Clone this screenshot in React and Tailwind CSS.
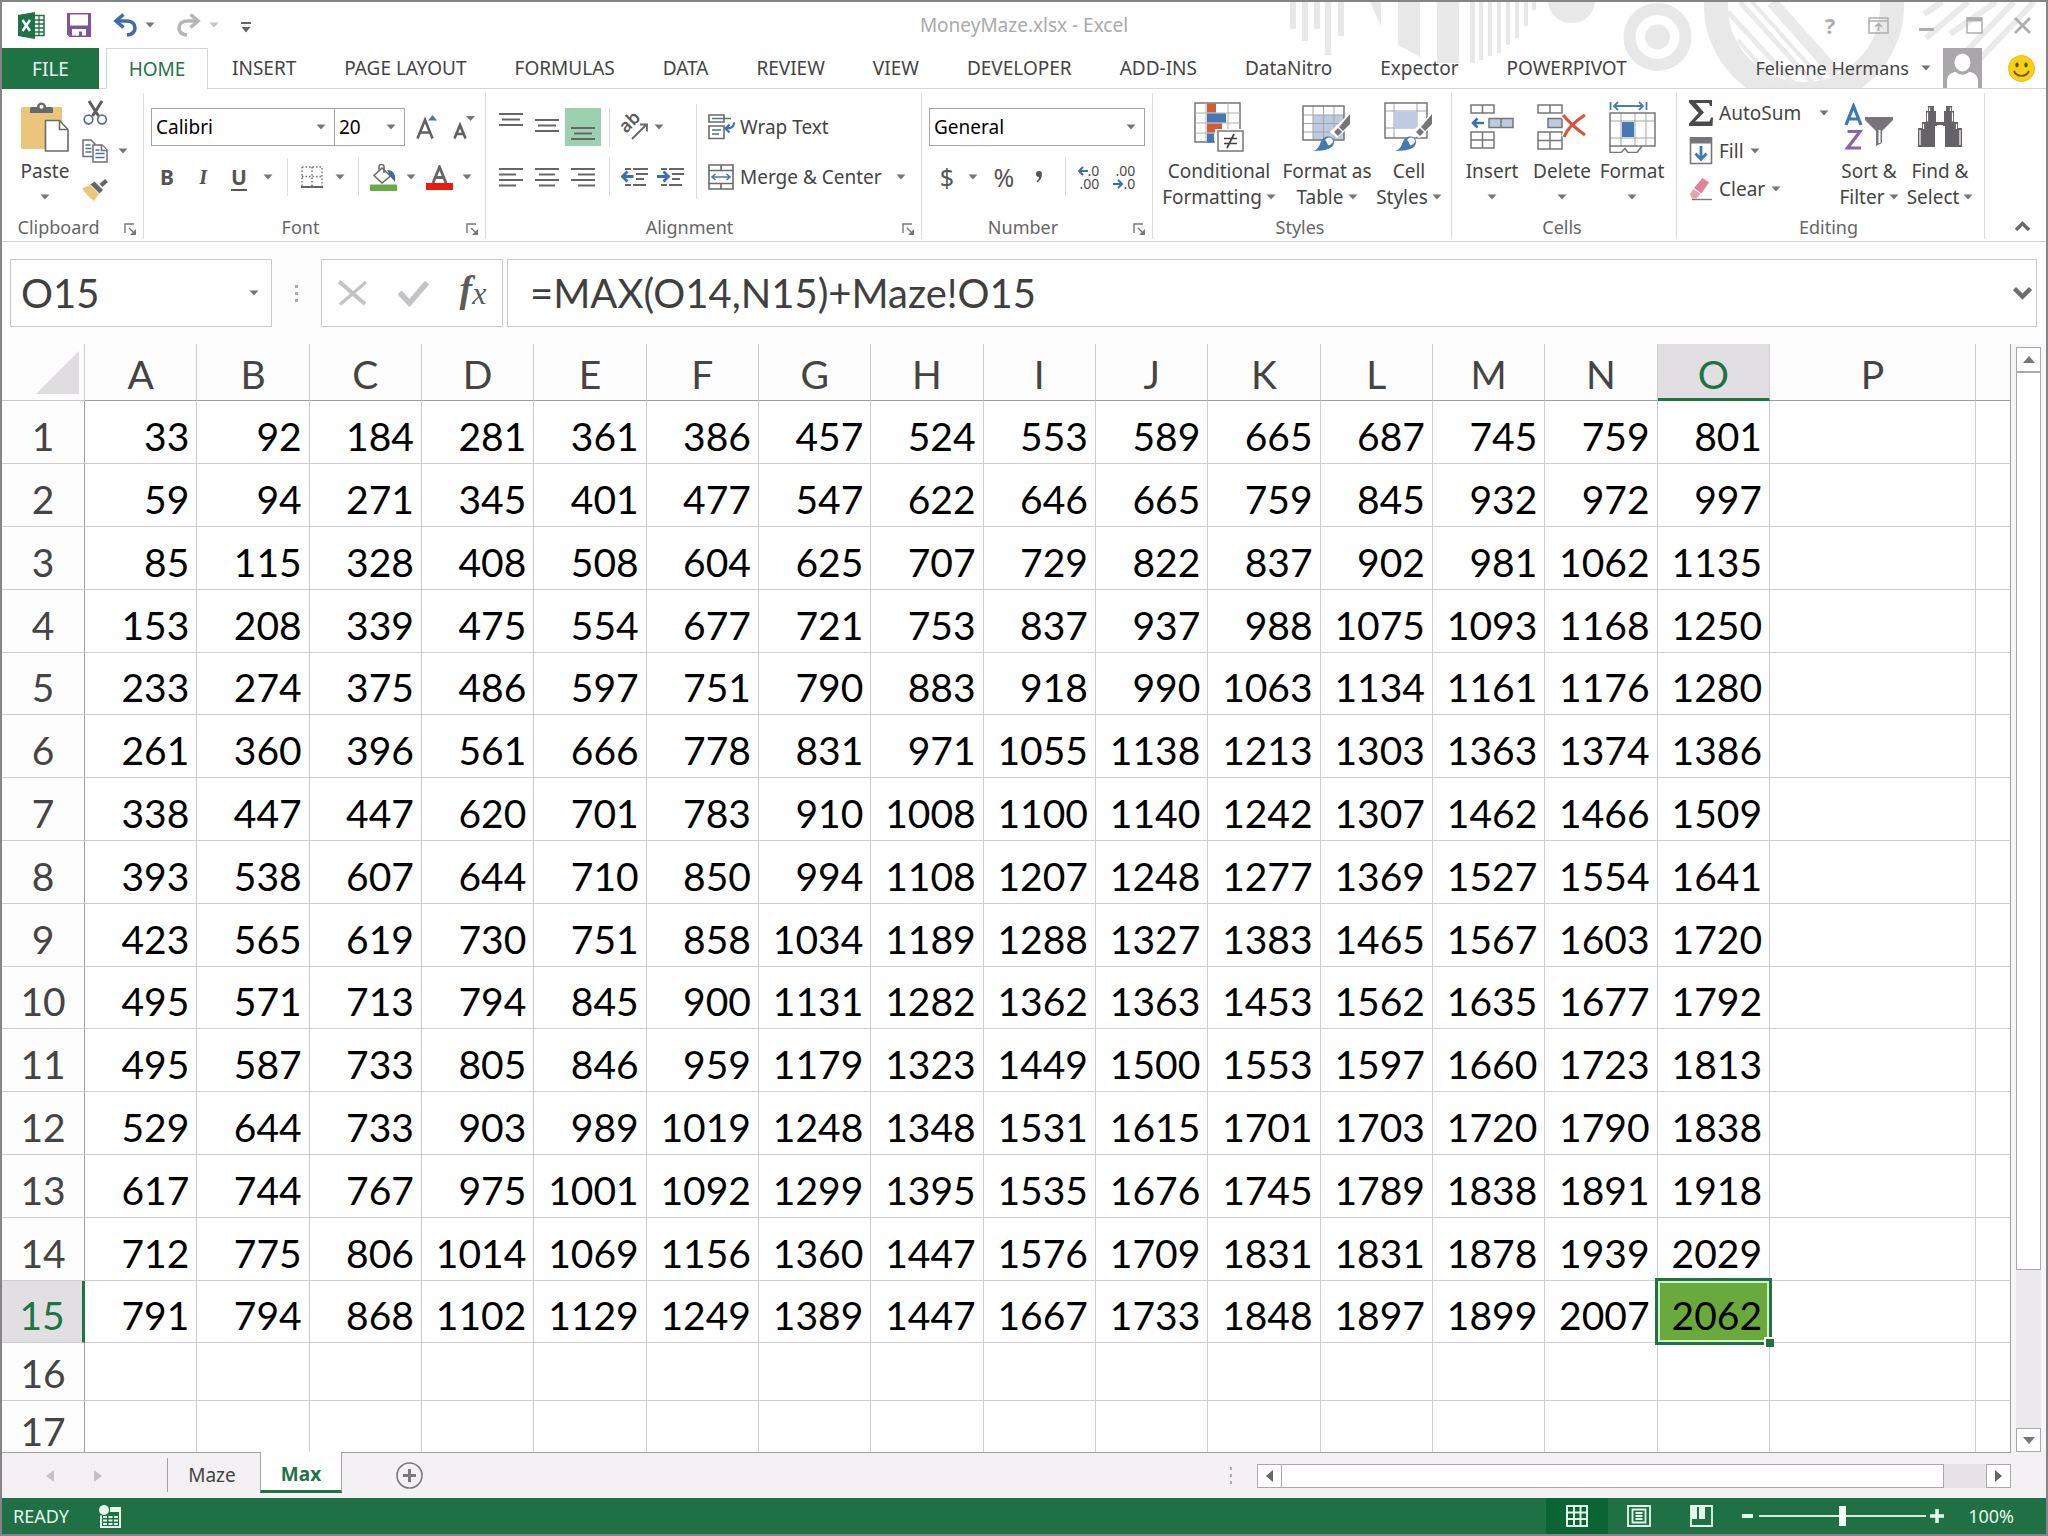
import React from "react";

const COLUMNS = ["A", "B", "C", "D", "E", "F", "G", "H", "I", "J", "K", "L", "M", "N", "O", "P", ""];

const ROWS = [
  [33, 92, 184, 281, 361, 386, 457, 524, 553, 589, 665, 687, 745, 759, 801],
  [59, 94, 271, 345, 401, 477, 547, 622, 646, 665, 759, 845, 932, 972, 997],
  [85, 115, 328, 408, 508, 604, 625, 707, 729, 822, 837, 902, 981, 1062, 1135],
  [153, 208, 339, 475, 554, 677, 721, 753, 837, 937, 988, 1075, 1093, 1168, 1250],
  [233, 274, 375, 486, 597, 751, 790, 883, 918, 990, 1063, 1134, 1161, 1176, 1280],
  [261, 360, 396, 561, 666, 778, 831, 971, 1055, 1138, 1213, 1303, 1363, 1374, 1386],
  [338, 447, 447, 620, 701, 783, 910, 1008, 1100, 1140, 1242, 1307, 1462, 1466, 1509],
  [393, 538, 607, 644, 710, 850, 994, 1108, 1207, 1248, 1277, 1369, 1527, 1554, 1641],
  [423, 565, 619, 730, 751, 858, 1034, 1189, 1288, 1327, 1383, 1465, 1567, 1603, 1720],
  [495, 571, 713, 794, 845, 900, 1131, 1282, 1362, 1363, 1453, 1562, 1635, 1677, 1792],
  [495, 587, 733, 805, 846, 959, 1179, 1323, 1449, 1500, 1553, 1597, 1660, 1723, 1813],
  [529, 644, 733, 903, 989, 1019, 1248, 1348, 1531, 1615, 1701, 1703, 1720, 1790, 1838],
  [617, 744, 767, 975, 1001, 1092, 1299, 1395, 1535, 1676, 1745, 1789, 1838, 1891, 1918],
  [712, 775, 806, 1014, 1069, 1156, 1360, 1447, 1576, 1709, 1831, 1831, 1878, 1939, 2029],
  [791, 794, 868, 1102, 1129, 1249, 1389, 1447, 1667, 1733, 1848, 1897, 1899, 2007, 2062],
  [],
  [],
];

const TABS = ["INSERT", "PAGE LAYOUT", "FORMULAS", "DATA", "REVIEW", "VIEW", "DEVELOPER", "ADD-INS", "DataNitro", "Expector", "POWERPIVOT"];

/* ---------- small shared pieces ---------- */

function Arrow({ className = "text-[#767676]" }) {
  return (
    <svg width="10" height="6" viewBox="0 0 10 6" className={`shrink-0 ${className}`} aria-hidden="true">
      <path d="M0.5 0.5h9L5 5.5z" fill="currentColor" />
    </svg>
  );
}

function IconButton({ label, className = "", children }) {
  return (
    <button type="button" aria-label={label} className={`flex shrink-0 items-center justify-center ${className}`}>
      {children}
    </button>
  );
}

function Group({ title, launcher, className = "", children }) {
  return (
    <section className={`flex shrink-0 flex-col ${className}`} aria-label={title}>
      <div className="flex min-h-0 flex-1">
        <div className="flex flex-1">{children}</div>
        <div className="mt-1 w-px bg-[#dcdbdd]" />
      </div>
      <div className="relative mb-0.5 flex h-6 items-center justify-center border-r border-[#dcdbdd] text-[18px] leading-6 text-[#666]">
        <span className={launcher ? "pr-7" : "pr-1"}>{title}</span>
        {launcher && (
          <button type="button" aria-label={`${title} settings`} className="absolute right-1.5 top-2">
            <svg width="13" height="13" viewBox="0 0 13 13" fill="none" stroke="#777" strokeWidth="1.4">
              <path d="M1 10V1h9M5 5l5.500 5.500" />
              <path d="M12 6v6H6z" fill="#777" stroke="none" />
            </svg>
          </button>
        )}
      </div>
    </section>
  );
}

function BigButton({ icon, lines, className = "" }) {
  return (
    <button type="button" className={`flex shrink-0 flex-col items-center pt-[13px] text-[19px] leading-[26px] text-[#444] ${className}`}>
      <span className="flex h-[50px] items-center justify-center">{icon}</span>
      <span className="mt-1.5 whitespace-nowrap">{lines[0]}</span>
      <span className="flex h-[26px] items-center gap-1 whitespace-nowrap">
        {lines[1]}
        <Arrow />
      </span>
    </button>
  );
}

function Lines({ rows, y = 0 }) {
  return (
    <svg width="24" height="38" viewBox="0 0 24 38" stroke="#666" strokeWidth="2" aria-hidden="true">
      {rows.map(([a, b], i) => (
        <path key={i} d={`M${a} ${y + i * 5.5}H${b}`} />
      ))}
    </svg>
  );
}

/* ---------- icons ---------- */

const ExcelIcon = () => (
  <svg width="27" height="27" viewBox="0 0 27 27" aria-hidden="true">
    <rect x="14" y="3.500" width="12" height="20" fill="#fff" stroke="#1f7246" strokeWidth="1.500" />
    <path d="M15 8h11M15 12h11M15 16h11M15 20h11M21 4v19" stroke="#1f7246" strokeWidth="1.300" />
    <path d="M0 3 17 0v27L0 24z" fill="#1f7246" />
    <path d="M4.500 8l7.500 11M12 8 4.500 19" stroke="#fff" strokeWidth="2.500" />
  </svg>
);

const SaveIcon = () => (
  <svg width="24" height="24" viewBox="0 0 24 24" aria-hidden="true">
    <path d="M0 0h24v24H2.500L0 21.500z" fill="#80549c" />
    <path d="M3 1.500h18v11H3zM5 16h14v6.500h-4v-4h-4v4H5z" fill="#fff" />
    <path d="M9 18h3v4.500H9z" fill="#fff" />
  </svg>
);

const UndoIcon = ({ flip, color }) => (
  <svg width="24" height="24" viewBox="0 0 24 24" fill="none" stroke={color} strokeWidth="3.600" className={flip ? "-scale-x-100" : ""} aria-hidden="true">
    <path d="M4 8h9c6 0 9 3 9 7s-3 6.500-8 7" />
    <path d="M10.500 1.500 3 8l7.500 6.500" />
  </svg>
);

const PasteIcon = () => (
  <svg width="48" height="50" viewBox="0 0 48 50" aria-hidden="true">
    <rect x="0" y="5" width="41" height="42" rx="1.500" fill="#ebc57c" />
    <path d="M9 11V7q0-2 2-2h5c0-6 9-6 9 0h5q2 0 2 2v4z" fill="#69666c" />
    <circle cx="20.500" cy="4.800" r="2" fill="#fff" />
    <path d="M24.500 18.500h14l8.500 9v21.500H24.500z" fill="#fff" stroke="#6c6a6e" strokeWidth="1.600" />
    <path d="M38.500 18.500v9H47" fill="none" stroke="#6c6a6e" strokeWidth="1.600" />
  </svg>
);

const CutIcon = () => (
  <svg width="25" height="26" viewBox="0 0 25 26" fill="none" aria-hidden="true">
    <path d="M6 1l9.500 15M19 1 9.500 16" stroke="#5f5d62" strokeWidth="3" />
    <circle cx="5.500" cy="19.500" r="4.300" stroke="#57708c" strokeWidth="1.700" />
    <circle cx="19" cy="19.500" r="4.300" stroke="#57708c" strokeWidth="1.700" />
  </svg>
);

const CopyIcon = () => (
  <svg width="26" height="24" viewBox="0 0 26 24" fill="#fff" stroke="#6b7178" strokeWidth="1.500" aria-hidden="true">
    <path d="M1 1h8l4 4v12.500H1z" />
    <path d="M3.500 6h5M3.500 9.500h6M3.500 13h6" stroke="#4d6c96" />
    <path d="M11 6h9l5 5v12H11z" />
    <path d="M19.500 6v5.500H25" />
    <path d="M13.500 11h4M13.500 14.500h9M13.500 18.500h9" stroke="#4d6c96" />
  </svg>
);

const BrushIcon = () => (
  <svg width="26" height="23" viewBox="0 0 26 23" aria-hidden="true">
    <path d="M0 10.500 8 7l9 9-5 7C8 20 4 16 0 10.500z" fill="#ebc57c" />
    <path d="M8.500 6.500l4-3 8.500 8.500-3.500 3.500z" fill="#67646a" />
    <path d="M17.500 6 23 1l3 3-5.500 5z" fill="#67646a" />
  </svg>
);

const FontSizeIcon = ({ grow }) => (
  <span className="flex items-end text-[#606060]">
    <svg width={grow ? 18 : 14} height="22" viewBox={grow ? "0 0 18 22" : "0 0 14 22"} fill="none" stroke="currentColor" strokeWidth="2.600" aria-hidden="true">
      {grow ? <path d="M1.500 21.500 9 3l7.500 18.500M4 15.500h10" /> : <path d="M1.500 21.500 7 8l5.500 13.500M3.500 17h7" />}
    </svg>
    <svg width="9" height="24" viewBox="0 0 9 24" aria-hidden="true" className={grow ? "-ml-1.5" : "-ml-px"}>
      <path d={grow ? "M0 5.500h9L4.500 0z" : "M0 1h9L4.500 6z"} fill={grow ? "#53719c" : "#777"} />
    </svg>
  </span>
);

const BorderIcon = () => (
  <svg width="22" height="22" viewBox="0 0 22 22" fill="none" stroke="#777" strokeWidth="1.500" aria-hidden="true">
    <path d="M1 1h20v19M1 1v19M11 1v19M1 10.500h20" strokeDasharray="1.600 1.900" />
    <path d="M0 21h22" strokeWidth="2" stroke="#666" />
  </svg>
);

const FillColorIcon = () => (
  <svg width="27" height="27" viewBox="0 0 27 27" fill="none" aria-hidden="true">
    <path d="M12 4 20.500 12 12 19 4 11.500z" fill="#fff" stroke="#666" strokeWidth="1.500" />
    <path d="M9 7V2.500q0-2 2.500-2t2.500 2V9" stroke="#666" strokeWidth="1.500" />
    <path d="M17 6c6 0 9 4 8 12l-3.500-4z" fill="#3f66a5" />
    <path d="M0 20.500h27v6.500H0z" fill="#6aaa45" />
  </svg>
);

const FontColorIcon = () => (
  <svg width="27" height="25" viewBox="0 0 27 25" fill="none" aria-hidden="true">
    <path d="M7 18 13.500 2 20 18M9.500 12.500h8" stroke="#666" strokeWidth="2.800" />
    <path d="M0 18h27v7H0z" fill="#ea1c12" />
  </svg>
);

const OrientationIcon = () => (
  <svg width="28" height="28" viewBox="0 0 28 28" aria-hidden="true">
    <text x="0" y="0" transform="translate(6 21) rotate(-45)" fontSize="18" fontFamily="Noto Sans, sans-serif" fontWeight="600" fill="#5c5c5c">ab</text>
    <path d="M12 26 26 12M20 11.500h7v7" fill="none" stroke="#666" strokeWidth="1.800" />
  </svg>
);

const IndentIcon = ({ inward }) => (
  <svg width="27" height="20" viewBox="0 0 27 20" fill="none" stroke="#666" strokeWidth="1.800" aria-hidden="true">
    <path d="M4 2h6M12 2h15M15 7h12M15 12h8M4 18h6M12 18h13" />
    {inward ? <path d="M0 9.500h11M6.500 4.500l5 5-5 5" stroke="#3c6fb0" strokeWidth="2.800" /> : <path d="M1.500 9.500h11M6.500 4.500l-5 5 5 5" stroke="#3c6fb0" strokeWidth="2.800" />}
  </svg>
);

const WrapIcon = () => (
  <svg width="27" height="26" viewBox="0 0 27 26" fill="none" stroke="#6a6a6a" strokeWidth="1.600" aria-hidden="true">
    <path d="M1 1h15v7H1zM1 12h15v12.500H1z" />
    <path d="M4 4.500h19M4 16h9M4 20h7" stroke="#5a6f8c" />
    <path d="M26 8.500c0 4-3 6-7.500 6M21.500 10.500l-4 4 4 4" stroke="#3c6fb0" strokeWidth="2.200" />
  </svg>
);

const MergeIcon = () => (
  <svg width="26" height="26" viewBox="0 0 26 26" fill="none" stroke="#6a6a6a" strokeWidth="1.600" aria-hidden="true">
    <path d="M1 1h24v24H1zM1 6.500h24M1 19.500h24M13 1v5.500M13 19.500V25" />
    <path d="M4 13h18M7.500 10 4 13l3.500 3M18.500 10l3.500 3-3.500 3" stroke="#4a7bab" />
  </svg>
);

const DecimalIcon = ({ more }) => (
  <span className="flex flex-col text-[14px] leading-[13px] text-[#4a4a4a]">
    <span className="flex items-center justify-end">
      {more && (
        <svg width="11" height="10" viewBox="0 0 11 10" fill="none" stroke="#3c6fb0" strokeWidth="2" aria-hidden="true">
          <path d="M11 5H2M6 1 2 5l4 4" />
        </svg>
      )}
      <span>{more ? ".0" : ".00"}</span>
    </span>
    <span className="flex items-center justify-end">
      {!more && (
        <svg width="11" height="10" viewBox="0 0 11 10" fill="none" stroke="#3c6fb0" strokeWidth="2" aria-hidden="true">
          <path d="M0 5h9M5 1l4 4-4 4" />
        </svg>
      )}
      <span>{more ? ".00" : ".0"}</span>
    </span>
  </span>
);

const Brush = () => (
  <>
    <path d="M48 13v9L35 34l-5-4z" fill="#fff" stroke="#fff" strokeWidth="3" />
    <path d="M48 12v10l-7 7-4-4zM36 26l4 4-4 4-4-4z" fill="#77757a" />
    <path d="M11 49c8-2 6-10 11-13 4-3 10-1 10 4 0 6-7 9-21 9z" fill="#4479b4" />
    <path d="M23 38c3-4 8-3 8 2-2 2-3 4-5 3-1-2-1-3-3-5z" fill="#fff" />
  </>
);

const ConditionalIcon = () => (
  <svg width="50" height="50" viewBox="0 0 50 50" aria-hidden="true">
    <path d="M1 1h45v39H1z" fill="#fff" stroke="#777" strokeWidth="1.500" />
    <path d="M1 11h45M1 21h45M1 31h30M34 1v30M12 1v39" stroke="#b0aeb2" strokeWidth="1" />
    <path d="M13 1.500h9v9h-9zM13 21.500h15v9H13z" fill="#d05d3a" />
    <path d="M13 11.500h19v9H13zM13 31.500h7v9h-7z" fill="#4479b4" />
    <path d="M21 27h30v23H21z" fill="#fff" />
    <path d="M24 29h25v20H24z" fill="#fff" stroke="#777" strokeWidth="1.500" />
    <path d="M30 36.500h13M30 41.500h13M40 32l-7 14" stroke="#444" strokeWidth="1.700" />
  </svg>
);

const FormatTableIcon = () => (
  <svg width="50" height="50" viewBox="0 0 50 50" aria-hidden="true">
    <path d="M1 4h41v34H1z" fill="#fff" />
    <path d="M11 13h31v25H11z" fill="#bccbdf" />
    <path d="M1 13h41M1 21.500h41M1 30h41M11 4v34M21.500 4v34M32 4v34" stroke="#a5a4a8" />
    <path d="M1 4h41v34H1z" fill="none" stroke="#777" strokeWidth="1.500" />
    <Brush />
  </svg>
);

const CellStylesIcon = () => (
  <svg width="50" height="50" viewBox="0 0 50 50" aria-hidden="true">
    <path d="M1 1h42v35H1z" fill="#fff" />
    <path d="M1 9h42M1 26h42M10 1v35M33 1v35" stroke="#a5a4a8" />
    <path d="M10 9.500h23v16.500H10z" fill="#bfcbe4" />
    <path d="M1 1h42v35H1z" fill="none" stroke="#777" strokeWidth="1.500" />
    <Brush />
  </svg>
);

const InsertIcon = () => (
  <svg width="44" height="48" viewBox="0 0 44 48" fill="#fff" stroke="#77757a" strokeWidth="1.500" aria-hidden="true">
    <path d="M1 2h23v8H1zM12.500 2v8M1 29h23v16H1zM12.500 29v16M1 37h23" />
    <path d="M19 15.500h24v9H19z" fill="#c0cade" />
    <path d="M31 15.500v9" />
    <path d="M14 20H3M7.500 15.500 3 20l4.500 4.500" fill="none" stroke="#3c6fb0" strokeWidth="2.500" />
  </svg>
);

const DeleteIcon = () => (
  <svg width="50" height="48" viewBox="0 0 50 48" fill="#fff" stroke="#77757a" strokeWidth="1.500" aria-hidden="true">
    <path d="M1 2h24v8H1zM13 2v8M1 29h24v17H1zM13 29v17M1 37.500h24" />
    <path d="M11 15.500h14v9H11z" fill="#c0cade" />
    <path d="M26 12c5 6 12 13 22 20M48 12c-8 5-17 12-21 22" fill="none" stroke="#fff" strokeWidth="6" />
    <path d="M26 12c5 6 12 13 22 20M48 12c-8 5-17 12-21 22" fill="none" stroke="#d8553a" strokeWidth="3.200" />
  </svg>
);

const FormatIcon = () => (
  <svg width="47" height="52" viewBox="0 0 47 52" fill="none" stroke="#77757a" strokeWidth="1.500" aria-hidden="true">
    <path d="M1.500 1v8M37.500 1v8M5 5h29M9 1 5 5l4 4M30 1l4 4-4 4" stroke="#4a7bb0" strokeWidth="1.800" />
    <path d="M1 20h45M1 37h45M12 12v33M26 12v33M37 12v33" stroke="#a5a4a8" strokeWidth="1" />
    <path d="M1 12h45v33H1z" />
    <path d="M13 21h12v15H13z" fill="#4479b4" stroke="none" />
    <path d="M1 45v6.500h11l4-4 3 4h9l5-6.500" />
  </svg>
);

const SigmaIcon = () => (
  <svg width="24" height="26" viewBox="0 0 24 26" aria-hidden="true">
    <path d="M0 0h23v6h-2l-1-3H7l8 9.500L6 21.500h14.500l1.500-4h2L23.500 26H0v-2.500l9.500-10.500L0 2.500z" fill="#4a4a4a" />
  </svg>
);

const FillDownIcon = () => (
  <svg width="24" height="28" viewBox="0 0 24 28" aria-hidden="true">
    <path d="M1.500 1h21v25.500h-21z" fill="#fff" stroke="#77757a" strokeWidth="1.600" />
    <path d="M1 0h22v6.500H1z" fill="#77757a" />
    <path d="M12 9v13M6.500 16.500l5.500 6 5.500-6" fill="none" stroke="#3c78b4" strokeWidth="2.800" />
  </svg>
);

const EraserIcon = () => (
  <svg width="24" height="24" viewBox="0 0 24 24" aria-hidden="true">
    <path d="M13.500 1 20 5.500l-7.500 11L5 11z" fill="#e3809a" />
    <path d="M4.500 12 11.500 17l-4 4.500H3L1 17z" fill="#eb9fb1" />
    <path d="M3 22.500h20" stroke="#777" strokeWidth="1.400" />
  </svg>
);

const SortIcon = () => (
  <svg width="50" height="48" viewBox="0 0 50 48" fill="none" aria-hidden="true">
    <path d="M2 22 9.500 3 17 22M4.500 16h10" stroke="#3c78b4" strokeWidth="3.200" />
    <path d="M3.500 28.500h12.500L3.500 45H17" stroke="#8b62ab" strokeWidth="3.200" />
    <path d="M21 14h28v3L38 28v12l-6 3V28L21 17z" fill="#77757a" />
    <path d="M35.500 27v13" stroke="#fff" strokeWidth="2" />
  </svg>
);

const FindIcon = () => (
  <svg width="46" height="42" viewBox="0 0 46 42" aria-hidden="true">
    <path d="M11 0h6v5h2v11h8V5h2V0h6v5h2v11h4v6h4v19H28V20H18v21H1V22h4v-6h4V5h2z" fill="#656367" />
    <path d="M12.500 1.500V5M10.500 6.500v9M33.500 1.500V5M35.500 6.500v9M3 24v15M6.500 18v5M43 24v15M39.500 18v5" stroke="#fff" strokeWidth="1.200" />
    <path d="M19 5.500h8V15h-8zM20 19h6v22h-6z" fill="#fff" />
  </svg>
);

const Smiley = () => (
  <svg width="27" height="27" viewBox="0 0 27 27" aria-hidden="true">
    <circle cx="13.500" cy="13.500" r="13" fill="#fad016" stroke="#e9b90c" />
    <ellipse cx="9" cy="10" rx="1.700" ry="2.400" fill="#5d4a10" />
    <ellipse cx="18" cy="10" rx="1.700" ry="2.400" fill="#5d4a10" />
    <path d="M6 16c3 6.500 12 6.500 15 0" fill="none" stroke="#6d560e" strokeWidth="1.800" />
  </svg>
);

const Avatar = () => (
  <svg width="39" height="40" viewBox="0 0 39 40" aria-hidden="true">
    <path d="M0 0h39v40H0z" fill="#a9a7aa" />
    <ellipse cx="19.500" cy="14.500" rx="8" ry="9" fill="#fff" />
    <path d="M4 40V33c0-6 4-8.500 9-9 4 3.500 9 3.500 13 0 5 .5 9 3 9 9v7z" fill="#fff" />
  </svg>
);

function TitleArt() {
  return (
    <svg width="760" height="86" viewBox="1286 2 760 86" className="pointer-events-none absolute right-0 top-0" aria-hidden="true">
      <g fill="#e9e8e9">
        <path d="M1290 2h6v27h-6zM1302 2h6v39h-6zM1314 2h6v27h-6zM1325 2h6v53h-6zM1338 2h6v34h-6z" />
        <path d="M1370 2h11v24zM1398 2h22v55l-22-12zM1437 2h22v61h-22z" />
        <path d="M1470 2h5v61l-5-1zM1479 2h4v58h-4zM1488 2h4v54h-4zM1497 2h4v51h-4zM1506 2h4v43h-4zM1515 2h4v36h-4zM1524 2h4v24h-4zM1532 2h4v8h-4z" />
        <path d="M1548 2h47c-3 28-44 28-47 0z" />
        <circle cx="1657.500" cy="37" r="12.500" />
      </g>
      <circle cx="1657.500" cy="37" r="28" fill="none" stroke="#e9e8e9" strokeWidth="12" />
      <circle cx="1804" cy="6" r="88" fill="none" stroke="#e9e8e9" strokeWidth="24" />
      <g stroke="#ebeaeb" fill="none">
        <path d="M1728 12l66 72" strokeWidth="5" />
        <path d="M1740 2l74 82" strokeWidth="5" />
        <path d="M1752 2l72 80" strokeWidth="4" />
        <path d="M1772 2l64 72" strokeWidth="12" />
        <path d="M1738 40l36 42" strokeWidth="4" />
        <path d="M1942 2l-18 12M1968 2l-42 36M1996 2l-46 32M2014 2l-64 66M2034 2l-72 76" strokeWidth="6" />
      </g>
    </svg>
  );
}

/* ---------- page sections ---------- */

function TitleBar() {
  return (
    <div className="relative grid h-[46px] grid-cols-[1fr_auto_1fr] items-center">
      <div className="flex items-center pl-4">
        <ExcelIcon />
        <IconButton label="Save" className="ml-[22px]"><SaveIcon /></IconButton>
        <IconButton label="Undo" className="ml-[22px]"><UndoIcon color="#3d6cae" /></IconButton>
        <IconButton label="Undo history" className="ml-2"><Arrow /></IconButton>
        <IconButton label="Redo" className="ml-[22px]"><UndoIcon flip color="#b6b5b8" /></IconButton>
        <IconButton label="Redo history" className="ml-2"><Arrow className="text-[#c4c3c6]" /></IconButton>
        <IconButton label="Customize toolbar" className="ml-[22px] mt-1">
          <svg width="10" height="12" viewBox="0 0 10 12" fill="#666">
            <path d="M0 1h10v2H0zM0.500 6h9L5 11.500z" />
          </svg>
        </IconButton>
      </div>
      <h1 className="py-1 text-[19px] leading-6 text-[#aaa9ab]">MoneyMaze.xlsx - Excel</h1>
      <div className="flex justify-end text-[#aeadaf]">
        <IconButton label="Help" className="h-8 w-12 text-[22px] font-bold leading-6">?</IconButton>
        <IconButton label="Ribbon display options" className="h-8 w-12">
          <svg width="21" height="17" viewBox="0 0 21 17" fill="none" stroke="currentColor" strokeWidth="1.500">
            <path d="M1 1h19v15H1zM1 4h19M10.500 14V7M7 10l3.500-3.500L14 10" />
          </svg>
        </IconButton>
        <IconButton label="Minimize" className="h-8 w-12">
          <svg width="15" height="17" viewBox="0 0 15 17" fill="currentColor"><path d="M0 11h15v3H0z" /></svg>
        </IconButton>
        <IconButton label="Maximize" className="h-8 w-12">
          <svg width="17" height="17" viewBox="0 0 17 17" fill="none" stroke="currentColor" strokeWidth="1.500">
            <path d="M1 1h15v15H1z" /><path d="M1 2.500h15" strokeWidth="4" />
          </svg>
        </IconButton>
        <IconButton label="Close" className="h-8 w-12">
          <svg width="17" height="17" viewBox="0 0 17 17" fill="none" stroke="currentColor" strokeWidth="2.800"><path d="M1 1l15 15M16 1 1 16" /></svg>
        </IconButton>
      </div>
    </div>
  );
}

function TabStrip() {
  return (
    <nav className="relative flex h-[41px] items-stretch border-b border-[#d5d4d6] text-[19px] leading-6 text-[#444]">
      <button type="button" className="-mb-px w-[97px] bg-[#1f7244] text-[#eaf7ee]">FILE</button>
      <button type="button" className="-mb-px ml-[7px] w-[102px] border border-b-0 border-[#d5d4d6] bg-white text-[#217346]">HOME</button>
      {TABS.map((t) => (
        <button key={t} type="button" className="whitespace-nowrap px-6">{t}</button>
      ))}
      <div className="ml-auto flex items-center">
        <button type="button" className="flex items-center gap-3 whitespace-nowrap pr-3 text-[18px]">
          Felienne Hermans
          <Arrow />
        </button>
        <Avatar />
        <IconButton label="Send a smile" className="ml-[26px] mr-[11px]"><Smiley /></IconButton>
      </div>
    </nav>
  );
}

function Combo({ label, value, className = "" }) {
  return (
    <div className={`flex h-[38px] shrink-0 items-center border border-[#a5a4a6] bg-white pl-1 pr-2 ${className}`}>
      <input aria-label={label} defaultValue={value} className="w-full min-w-0 flex-1 text-[19px] leading-6 text-black outline-none" />
      <Arrow />
    </div>
  );
}

const Divider = ({ className = "" }) => <div className={`h-full w-px shrink-0 bg-[#dcdbdd] ${className}`} />;

function Ribbon() {
  return (
    <div className="flex h-[153px] border-b border-[#d5d4d6]">
      <Group title="Clipboard" launcher className="w-[142px]">
        <BigButton icon={<PasteIcon />} lines={["Paste", ""]} className="ml-[11px] w-16" />
        <div className="flex flex-col pl-[5px] pt-[5px]">
          <IconButton label="Cut" className="h-[38px] w-[26px]"><CutIcon /></IconButton>
          <div className="flex h-[38px] items-center gap-2.5">
            <IconButton label="Copy"><CopyIcon /></IconButton>
            <IconButton label="Copy options"><Arrow /></IconButton>
          </div>
          <IconButton label="Format Painter" className="h-[38px] w-[26px]"><BrushIcon /></IconButton>
        </div>
      </Group>

      <Group title="Font" launcher className="w-[342px]">
        <div className="flex flex-col gap-3 pt-[19px]">
          <div className="flex h-[38px] pl-[7px]">
            <Combo label="Font name" value="Calibri" className="w-[184px]" />
            <Combo label="Font size" value="20" className="-ml-px w-[71px]" />
            <IconButton label="Increase font size" className="ml-0.5 w-[38px]"><FontSizeIcon grow /></IconButton>
            <IconButton label="Decrease font size" className="w-[38px]"><FontSizeIcon /></IconButton>
          </div>
          <div className="flex h-[38px] items-center pl-[5px] text-[21px] leading-6 text-[#555]">
            <IconButton label="Bold" className="w-9 font-bold">B</IconButton>
            <IconButton label="Italic" className="w-9 font-serif font-bold italic">I</IconButton>
            <IconButton label="Underline" className="w-9 font-bold underline underline-offset-4">U</IconButton>
            <IconButton label="Underline styles" className="w-[22px]"><Arrow /></IconButton>
            <Divider className="ml-2" />
            <IconButton label="Borders" className="ml-1 w-10"><BorderIcon /></IconButton>
            <IconButton label="Border styles" className="w-4"><Arrow /></IconButton>
            <Divider className="ml-2.5" />
            <IconButton label="Fill color" className="ml-1 w-10"><FillColorIcon /></IconButton>
            <IconButton label="Fill colors" className="w-4"><Arrow /></IconButton>
            <IconButton label="Font color" className="w-10"><FontColorIcon /></IconButton>
            <IconButton label="Font colors" className="w-4"><Arrow /></IconButton>
          </div>
        </div>
      </Group>

      <Group title="Alignment" launcher className="w-[436px]">
        <div className="flex w-[210px] flex-col gap-3 pt-[19px]">
          <div className="flex h-[38px] pl-[7px]">
            <IconButton label="Top align" className="w-9"><Lines y={6} rows={[[0, 24], [3, 21], [0, 24]]} /></IconButton>
            <IconButton label="Middle align" className="w-9"><Lines y={12} rows={[[0, 24], [3, 21], [0, 24]]} /></IconButton>
            <IconButton label="Bottom align" className="w-9 bg-[#9bd0b1]"><Lines y={20} rows={[[0, 24], [3, 21], [0, 24]]} /></IconButton>
            <Divider className="ml-2" />
            <IconButton label="Orientation" className="ml-1.5 w-9"><OrientationIcon /></IconButton>
            <IconButton label="Orientation options" className="w-[14px]"><Arrow /></IconButton>
          </div>
          <div className="flex h-[38px] pl-[7px]">
            <IconButton label="Align left" className="w-9"><Lines y={11} rows={[[0, 24], [0, 17], [0, 24], [0, 17]]} /></IconButton>
            <IconButton label="Center" className="w-9"><Lines y={11} rows={[[0, 24], [4, 20], [0, 24], [4, 20]]} /></IconButton>
            <IconButton label="Align right" className="w-9"><Lines y={11} rows={[[0, 24], [7, 24], [0, 24], [7, 24]]} /></IconButton>
            <Divider className="ml-2" />
            <IconButton label="Decrease indent" className="ml-1.5 w-9"><IndentIcon /></IconButton>
            <IconButton label="Increase indent" className="w-9"><IndentIcon inward /></IconButton>
          </div>
        </div>
        <div className="mb-4 mt-[15px] w-px bg-[#dcdbdd]" />
        <div className="flex flex-col gap-3 pl-[11px] pt-[19px] text-[19px] leading-6 text-[#444]">
          <button type="button" className="flex h-[38px] items-center gap-[5px]"><WrapIcon />Wrap Text</button>
          <button type="button" className="flex h-[38px] w-[198px] items-center gap-1.5 whitespace-nowrap">
            <MergeIcon />Merge &amp; Center<span className="ml-auto"><Arrow /></span>
          </button>
        </div>
      </Group>

      <Group title="Number" launcher className="w-[231px]">
        <div className="flex flex-col gap-3 pl-[7px] pt-[19px]">
          <Combo label="Number format" value="General" className="w-[216px]" />
          <div className="flex h-[38px] items-center text-[25px] leading-8 text-[#555]">
            <IconButton label="Accounting format" className="w-9">$</IconButton>
            <IconButton label="Currencies" className="w-4"><Arrow /></IconButton>
            <IconButton label="Percent style" className="ml-1 w-[38px]">%</IconButton>
            <IconButton label="Comma style" className="ml-1 h-[38px] w-6">
              <svg width="8" height="12" viewBox="0 0 8 12"><path d="M1 3a3 3 0 0 1 6 0c0 4-2 7-5 8.500L1.500 10C3 9 4 8 4 6 2 6 1 5 1 3z" fill="#555" /></svg>
            </IconButton>
            <Divider className="ml-[14px]" />
            <IconButton label="Increase decimal" className="ml-1 w-9"><DecimalIcon more /></IconButton>
            <IconButton label="Decrease decimal" className="w-9"><DecimalIcon /></IconButton>
          </div>
        </div>
      </Group>

      <Group title="Styles" className="w-[299px]">
        <BigButton icon={<ConditionalIcon />} lines={["Conditional", "Formatting"]} className="ml-1 w-[124px]" />
        <BigButton icon={<FormatTableIcon />} lines={["Format as", "Table"]} className="w-[92px]" />
        <BigButton icon={<CellStylesIcon />} lines={["Cell", "Styles"]} className="w-[72px]" />
      </Group>

      <Group title="Cells" className="w-[225px]">
        <BigButton icon={<InsertIcon />} lines={["Insert", ""]} className="ml-[5px] w-[70px]" />
        <BigButton icon={<DeleteIcon />} lines={["Delete", ""]} className="w-[70px]" />
        <BigButton icon={<FormatIcon />} lines={["Format", ""]} className="w-[70px]" />
      </Group>

      <Group title="Editing" className="w-[308px]">
        <div className="flex w-[152px] flex-col pl-3 pt-[5px] text-[19px] leading-6 text-[#444]">
          <button type="button" className="flex h-[38px] items-center gap-1.5"><SigmaIcon />AutoSum<span className="ml-auto"><Arrow /></span></button>
          <button type="button" className="flex h-[38px] items-center gap-1.5"><FillDownIcon />Fill<Arrow /></button>
          <button type="button" className="flex h-[38px] items-center gap-1.5"><EraserIcon />Clear<Arrow /></button>
        </div>
        <BigButton icon={<SortIcon />} lines={["Sort &", "Filter"]} className="ml-2 w-16" />
        <BigButton icon={<FindIcon />} lines={["Find &", "Select"]} className="ml-1 w-[70px]" />
      </Group>

      <div className="flex flex-1 items-end justify-end pb-2.5 pr-4">
        <IconButton label="Collapse ribbon">
          <svg width="15" height="10" viewBox="0 0 15 10" fill="none" stroke="#6c6a6e" strokeWidth="3.400"><path d="M1 9l6.500-6.500L14 9" /></svg>
        </IconButton>
      </div>
    </div>
  );
}

function FormulaBar() {
  return (
    <div className="flex h-[102px] items-stretch bg-[#fdfdfd] pb-[17px] pl-2 pr-[9px] pt-[17px]">
      <div className="flex w-[262px] shrink-0 items-center border border-[#c9c8ca] bg-white pl-2.5 pr-3">
        <input aria-label="Name box" defaultValue="O15" className="w-full min-w-0 flex-1 font-['Lato',sans-serif] text-[40px] leading-[48px] text-[#3f3f3f] outline-none" />
        <Arrow />
      </div>
      <div className="flex w-[49px] shrink-0 flex-col items-center justify-center gap-1">
        <span className="h-[3px] w-[3px] bg-[#aaa9ab]" />
        <span className="h-[3px] w-[3px] bg-[#aaa9ab]" />
        <span className="h-[3px] w-[3px] bg-[#aaa9ab]" />
      </div>
      <div className="flex w-[182px] shrink-0 items-center justify-around border border-[#c9c8ca] bg-white">
        <IconButton label="Cancel">
          <svg width="29" height="26" viewBox="0 0 29 26" fill="none" stroke="#c3c2c4" strokeWidth="4"><path d="M1 1.500 27 24" /><path d="M28 2 2 24.500" strokeWidth="3" /></svg>
        </IconButton>
        <IconButton label="Enter">
          <svg width="31" height="27" viewBox="0 0 31 27" fill="none" stroke="#c3c2c4" strokeWidth="5.500"><path d="M1.500 12.500 11.500 23 29 2.500" /></svg>
        </IconButton>
        <IconButton label="Insert function" className="pb-2 font-['Liberation_Serif',serif] text-[38px] italic leading-[44px] text-[#5c5b5d]">
          <span className="font-bold">f</span><span className="pt-2 text-[32px] leading-9">x</span>
        </IconButton>
      </div>
      <div className="ml-1 flex flex-1 items-center border border-[#c9c8ca] bg-white pl-[22px] pr-1">
        <input aria-label="Formula" defaultValue="=MAX(O14,N15)+Maze!O15" className="w-full min-w-0 flex-1 font-['Lato',sans-serif] text-[40px] leading-[48px] text-[#3f3f3f] outline-none" />
        <IconButton label="Expand formula bar">
          <svg width="19" height="14" viewBox="0 0 19 14" fill="none" stroke="#6f6d71" strokeWidth="4.500"><path d="M1.500 2.500l8 8 8-8" /></svg>
        </IconButton>
      </div>
    </div>
  );
}

function Sheet() {
  return (
    <div className="flex min-h-0 flex-1 bg-[#fdfdfd]">
      <div className="min-w-0 flex-1 overflow-hidden border-r border-[#a3a2a4]">
        <table className="w-full table-fixed border-separate border-spacing-0 font-['Lato',sans-serif] text-[39px] leading-[47px]">
          <colgroup>
            <col className="w-[83px]" />
            {COLUMNS.slice(0, 15).map((c) => (
              <col key={c} />
            ))}
            <col className="w-[206px]" />
            <col className="w-[34px]" />
          </colgroup>
          <thead>
            <tr className="h-[57px]">
              <th scope="col" aria-label="Select all" className="border-b border-r border-b-[#c8c7c9] border-r-[#cecdd0] p-0 align-bottom">
                <svg width="43" height="43" viewBox="0 0 43 43" className="mb-1.5 ml-auto mr-[5px]" aria-hidden="true"><path d="M43 0v43H0z" fill="#dedcdf" /></svg>
              </th>
              {COLUMNS.map((c, i) => (
                <th
                  key={i}
                  scope="col"
                  className={
                    c === "O"
                      ? "border-b-[3px] border-r border-b-[#217346] border-r-[#cecdd0] bg-[#e1dfe1] p-0 align-bottom font-normal text-[#217346]"
                      : `border-b border-b-[#9f9ea0] p-0 pb-0.5 align-bottom font-normal text-[#444] ${c ? "border-r border-r-[#cecdd0]" : ""}`
                  }
                >
                  {c}
                </th>
              ))}
            </tr>
          </thead>
          <tbody>
            {ROWS.map((row, r) => {
              const active = r === 14;
              return (
                <tr key={r} className={r > 14 ? "h-[58px]" : r % 5 === 4 ? "h-[62px]" : "h-[63px]"}>
                  <th
                    scope="row"
                    className={`border-b border-b-[#cecdd0] p-0 pb-[3px] align-bottom font-normal ${
                      active ? "border-r-[3px] border-r-[#217346] bg-[#e1dfe1] text-[#217346]" : "border-r border-r-[#9f9ea0] bg-[#fdfdfd] text-[#444]"
                    }`}
                  >
                    {r + 1}
                  </th>
                  {COLUMNS.map((c, i) => {
                    const selected = active && c === "O";
                    return (
                      <td
                        key={i}
                        className={`border-b border-b-[#cecdd0] p-0 pb-[3px] pr-[7px] text-right align-bottom text-black ${c ? "border-r border-r-[#cecdd0]" : ""} ${
                          selected ? "relative bg-[#6aaa3c]" : "bg-white"
                        }`}
                      >
                        {row[i]}
                        {selected && (
                          <span className="pointer-events-none absolute -bottom-[3px] -left-[3px] -right-[3px] -top-[3px] border-[3px] border-[#217346] ring-2 ring-inset ring-[#d3efc4]">
                            <span className="absolute -bottom-[5px] -right-[5px] h-[10px] w-[10px] border-l-2 border-t-2 border-white bg-[#217346]" />
                          </span>
                        )}
                      </td>
                    );
                  })}
                </tr>
              );
            })}
          </tbody>
        </table>
      </div>
      <div className="flex w-[35px] shrink-0 flex-col items-center bg-[#f6f5f7] pt-[3px]">
        <IconButton label="Scroll up" className="h-[25px] w-[25px] border border-[#a9a8aa] bg-white">
          <svg width="12" height="7" viewBox="0 0 12 7" fill="#777"><path d="M0 7h12L6 0z" /></svg>
        </IconButton>
        <div className="flex w-[25px] flex-1 flex-col bg-[#ebe9ec]">
          <div className="h-[85%] border border-[#a9a8aa] bg-white" />
        </div>
        <IconButton label="Scroll down" className="h-6 w-[25px] border border-[#a9a8aa] bg-white">
          <svg width="12" height="7" viewBox="0 0 12 7" fill="#777"><path d="M0 0h12L6 7z" /></svg>
        </IconButton>
      </div>
    </div>
  );
}

function SheetTabs() {
  return (
    <div className="flex h-[46px] bg-[#f3f1f4] text-[19px] leading-6">
      <div className="flex w-[165px] items-center border-t border-[#a3a2a4] pl-[42px]">
        <IconButton label="Previous sheet" className="w-3">
          <svg width="8" height="12" viewBox="0 0 8 12" fill="#c3c2c5"><path d="M8 0v12L0 6z" /></svg>
        </IconButton>
        <IconButton label="Next sheet" className="ml-9 w-3">
          <svg width="8" height="12" viewBox="0 0 8 12" fill="#c3c2c5"><path d="M0 0v12l8-6z" /></svg>
        </IconButton>
      </div>
      <div className="flex w-[93px] border-t border-[#a3a2a4] pb-1.5 pt-[5px]">
        <button type="button" className="flex-1 border-l border-[#a3a2a4] pr-1 text-[#444]">Maze</button>
      </div>
      <button type="button" className="mb-[5px] w-[82px] border-x border-b-[3px] border-x-[#a3a2a4] border-b-[#217346] bg-white pt-1.5 font-bold text-[#217346]">Max</button>
      <div className="flex flex-1 items-center border-t border-[#a3a2a4]">
        <IconButton label="New sheet" className="ml-[54px]">
          <svg width="27" height="27" viewBox="0 0 27 27" fill="none" stroke="#7b797d">
            <circle cx="13.500" cy="13.500" r="12.500" strokeWidth="1.600" />
            <path d="M13.500 7v13M7 13.500h13" strokeWidth="3" />
          </svg>
        </IconButton>
        <div className="ml-auto flex w-[53px] flex-col items-center gap-1">
          <span className="h-[3px] w-[2px] bg-[#aaa9ab]" />
          <span className="h-[3px] w-[2px] bg-[#aaa9ab]" />
          <span className="h-[3px] w-[2px] bg-[#aaa9ab]" />
        </div>
        <div className="flex h-6 w-[754px] bg-[#e6e4e7]">
          <IconButton label="Scroll left" className="w-[25px] border border-[#a9a8aa] bg-white">
            <svg width="7" height="12" viewBox="0 0 7 12" fill="#666"><path d="M7 0v12L0 6z" /></svg>
          </IconButton>
          <div className="flex flex-1">
            <div className="w-[94%] border border-l-0 border-[#a9a8aa] bg-white" />
          </div>
          <IconButton label="Scroll right" className="w-[25px] border border-[#a9a8aa] bg-white">
            <svg width="7" height="12" viewBox="0 0 7 12" fill="#666"><path d="M0 0v12l7-6z" /></svg>
          </IconButton>
        </div>
      </div>
      <div className="w-[35px] border-t border-[#f3f1f4]" />
    </div>
  );
}

function StatusBar() {
  return (
    <footer className="flex h-9 items-center bg-[#1f7145] pl-[11px] pr-8 text-[18px] leading-6 text-[#e3f8ea]">
      <span>READY</span>
      <IconButton label="Record macro" className="ml-[30px]">
        <svg width="22" height="23" viewBox="0 0 22 23" fill="#e3f8ea">
          <circle cx="5" cy="5" r="5" />
          <path d="M11 2h11v5H11z" />
          <path d="M2 10.500V22h19V3" fill="none" stroke="#e3f8ea" strokeWidth="2" />
          <path d="M4 11h4v2H4zM9.500 11h4v2h-4zM15 11h4v2h-4zM4 14.500h4v2H4zM9.500 14.500h4v2h-4zM15 14.500h4v2h-4zM4 18h4v2H4zM9.500 18h4v2h-4zM15 18h4v2h-4z" />
        </svg>
      </IconButton>
      <div className="ml-auto flex h-full items-center">
        <IconButton label="Normal view" className="h-full w-[62px] bg-[#0a6434]">
          <svg width="22" height="22" viewBox="0 0 22 22" fill="none" stroke="#e3f8ea" strokeWidth="2"><path d="M1 1h20v20H1zM1 7.500h20M1 14h20M8 1v20M14.500 1v20" /></svg>
        </IconButton>
        <IconButton label="Page layout view" className="h-full w-[62px]">
          <svg width="24" height="22" viewBox="0 0 24 22" fill="none" stroke="#e3f8ea" strokeWidth="1.800"><path d="M1 1h22v20H1zM5.500 4.500h13v13h-13zM8.500 8h7M8.500 11h7M8.500 14h7" /></svg>
        </IconButton>
        <IconButton label="Page break preview" className="h-full w-[62px]">
          <svg width="23" height="22" viewBox="0 0 23 22" fill="none" stroke="#e3f8ea" strokeWidth="1.800"><path d="M1 1h21v20H1z" /><path d="M1 1h6v13H1zM9 1h6v13H9z" fill="#e3f8ea" stroke="none" /></svg>
        </IconButton>
        <IconButton label="Zoom out" className="ml-2.5 w-[11px]">
          <svg width="11" height="4" viewBox="0 0 11 4" fill="#e3f8ea"><path d="M0 0h11v4H0z" /></svg>
        </IconButton>
        <input
          type="range"
          aria-label="Zoom"
          min="0"
          max="200"
          defaultValue="100"
          className="ml-1.5 h-5 w-[167px] appearance-none bg-transparent [&::-webkit-slider-runnable-track]:h-[2px] [&::-webkit-slider-runnable-track]:bg-[#d0eeda] [&::-webkit-slider-thumb]:-mt-[9px] [&::-webkit-slider-thumb]:h-5 [&::-webkit-slider-thumb]:w-[7px] [&::-webkit-slider-thumb]:appearance-none [&::-webkit-slider-thumb]:bg-[#f2fdf5]"
        />
        <IconButton label="Zoom in" className="ml-1 w-[14px]">
          <svg width="14" height="14" viewBox="0 0 14 14" fill="none" stroke="#e3f8ea" strokeWidth="3.500"><path d="M7 0v14M0 7h14" /></svg>
        </IconButton>
        <span className="ml-6">100%</span>
      </div>
    </footer>
  );
}

export default function App() {
  return (
    <main className="flex h-screen flex-col overflow-hidden border-2 border-[#858486] bg-white font-['Noto_Sans',sans-serif]">
      <header className="relative">
        <TitleArt />
        <TitleBar />
        <TabStrip />
      </header>
      <Ribbon />
      <FormulaBar />
      <Sheet />
      <SheetTabs />
      <StatusBar />
    </main>
  );
}
